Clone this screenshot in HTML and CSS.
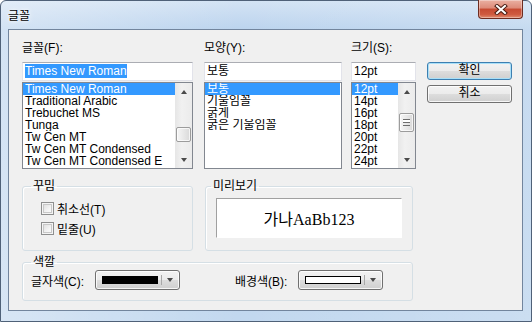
FILE: index.html
```html
<!DOCTYPE html>
<html lang="ko">
<head>
    <meta charset="UTF-8">
    <title>글꼴</title>
    <link rel="stylesheet" href="styles.css">
</head>
<body>
    <div class="window">
        <div class="titlebar">
            <span class="title">글꼴</span>
            <div class="close">
                <svg width="14" height="11" viewBox="0 0 14 11">
                    <path d="M3 2 L11 9 M11 2 L3 9" stroke="#4a1c12" stroke-width="4" stroke-linecap="square" fill="none"/>
                    <path d="M3 2 L11 9 M11 2 L3 9" stroke="#ffffff" stroke-width="2" stroke-linecap="square" fill="none"/>
                </svg>
            </div>
        </div>

        <div class="client">
            <div class="top-row">
                <div class="col col-font">
                    <div class="label">글꼴(F):</div>
                    <div class="textbox"><span class="sel">Times New Roman</span></div>
                    <div class="listbox">
                        <ul class="items">
                            <li class="active">Times New Roman</li>
                            <li>Traditional Arabic</li>
                            <li>Trebuchet MS</li>
                            <li>Tunga</li>
                            <li>Tw Cen MT</li>
                            <li>Tw Cen MT Condensed</li>
                            <li>Tw Cen MT Condensed E</li>
                        </ul>
                        <div class="scrollbar">
                            <div class="sb-btn"><span class="tri-up"></span></div>
                            <div class="sb-track thumb-font"><div class="thumb"></div></div>
                            <div class="sb-btn"><span class="tri-down"></span></div>
                        </div>
                    </div>
                </div>

                <div class="col col-style">
                    <div class="label">모양(Y):</div>
                    <div class="textbox">보통</div>
                    <div class="listbox">
                        <ul class="items">
                            <li class="active">보통</li>
                            <li>기울임꼴</li>
                            <li>굵게</li>
                            <li>굵은 기울임꼴</li>
                        </ul>
                    </div>
                </div>

                <div class="col col-size">
                    <div class="label">크기(S):</div>
                    <div class="textbox">12pt</div>
                    <div class="listbox">
                        <ul class="items">
                            <li class="active">12pt</li>
                            <li>14pt</li>
                            <li>16pt</li>
                            <li>18pt</li>
                            <li>20pt</li>
                            <li>22pt</li>
                            <li>24pt</li>
                        </ul>
                        <div class="scrollbar">
                            <div class="sb-btn"><span class="tri-up"></span></div>
                            <div class="sb-track thumb-size"><div class="thumb"><span class="grip"></span></div></div>
                            <div class="sb-btn"><span class="tri-down"></span></div>
                        </div>
                    </div>
                </div>

                <div class="buttons">
                    <div class="btn btn-default">확인</div>
                    <div class="btn">취소</div>
                </div>
            </div>

            <div class="mid-row">
                <fieldset class="group group-effects">
                    <legend>꾸밈</legend>
                    <div class="group-body">
                        <div class="check"><span class="box"></span>취소선(T)</div>
                        <div class="check"><span class="box"></span>밑줄(U)</div>
                    </div>
                </fieldset>
                <fieldset class="group group-preview">
                    <legend>미리보기</legend>
                    <div class="group-body">
                        <div class="preview">가나AaBb123</div>
                    </div>
                </fieldset>
            </div>

            <fieldset class="group group-colors">
                <legend>색깔</legend>
                <div class="group-body color-row">
                    <span class="color-label">글자색(C):</span>
                    <div class="combo">
                        <span class="swatch swatch-black"></span>
                        <span class="combo-sep"></span>
                        <span class="tri-down"></span>
                    </div>
                    <span class="color-label color-label-bg">배경색(B):</span>
                    <div class="combo">
                        <span class="swatch swatch-white"></span>
                        <span class="combo-sep"></span>
                        <span class="tri-down"></span>
                    </div>
                </div>
            </fieldset>
        </div>
    </div>
</body>
</html>
```

FILE: styles.css
```css
* {
    box-sizing: border-box;
}
body {
    margin: 0;
    width: 532px;
    height: 322px;
    overflow: hidden;
    font-family: "Liberation Sans", "Noto Sans CJK KR", sans-serif;
    font-size: 12px;
    color: #000000;
    background: #ffffff;
}
.window {
    width: 532px;
    height: 322px;
    border: 1px solid #4f6178;
    border-radius: 6px 6px 0 0;
    padding: 0 8px 10px 7px;
    background:
        linear-gradient(to right, rgba(255, 255, 255, 0.35), rgba(255, 255, 255, 0) 45%, rgba(255, 255, 255, 0.15)),
        linear-gradient(#d3e3f4, #bcd4ee 28px, #c2d8ef);
}
.titlebar {
    height: 28px;
    display: flex;
    align-items: flex-start;
}
.title {
    padding-top: 8px;
    line-height: 14px;
    text-shadow: 0 0 6px #ffffff, 0 0 3px #ffffff;
}
.close {
    margin-left: auto;
    margin-top: -1px;
    width: 45px;
    height: 19px;
    border: 1px solid #6e2c20;
    border-top: none;
    border-radius: 0 0 4px 4px;
    display: flex;
    align-items: center;
    justify-content: center;
    background: linear-gradient(#eab0a2 0%, #dd8a78 45%, #c64a32 50%, #cf5a3f 80%, #e08c6f 100%);
    box-shadow: inset 0 0 0 1px rgba(255, 255, 255, 0.35);
}
.client {
    height: 282px;
    border: 1px solid #72859d;
    background: #f0f0f0;
    padding: 10px 0 0 13px;
}

/* top row: lists and buttons */
.top-row {
    display: flex;
    align-items: flex-start;
}
.col-font {
    width: 171px;
    margin-right: 11px;
}
.col-style {
    width: 138px;
    margin-right: 9px;
}
.col-size {
    width: 65px;
    margin-right: 11px;
}
.label {
    height: 14px;
    line-height: 14px;
    margin: 1px 0 7px;
}
.textbox {
    height: 19px;
    border: 1px solid #e2e3ea;
    border-top-color: #abadb3;
    background: #ffffff;
    padding-left: 2px;
    line-height: 16px;
    white-space: nowrap;
    overflow: hidden;
}
.sel {
    background: #3399ff;
    color: #ffffff;
}
.listbox {
    margin-top: 1px;
    height: 87px;
    border: 1px solid #828790;
    background: #ffffff;
    display: flex;
}
.items {
    list-style: none;
    margin: 0;
    padding: 0;
    flex: 1;
    min-width: 0;
    overflow: hidden;
}
.items li {
    height: 12px;
    line-height: 12px;
    padding-left: 2px;
    white-space: nowrap;
    overflow: hidden;
}
.items li.active {
    background: #3399ff;
    color: #ffffff;
}
.col-style .items li.active {
    margin-right: 1px;
}

/* scrollbars */
.scrollbar {
    width: 17px;
    display: flex;
    flex-direction: column;
    background: linear-gradient(to right, #e6e6e6, #f1f1f1 40%, #ebebeb);
}
.sb-btn {
    height: 17px;
    display: flex;
    align-items: center;
    justify-content: center;
}
.sb-track {
    flex: 1;
}
.thumb {
    margin: 0 1px;
    border: 1px solid #9c9c9c;
    border-radius: 2px;
    background: linear-gradient(to right, #f6f6f6, #e8e8e8 50%, #d9d9d9);
    box-shadow: inset 0 0 0 1px rgba(255, 255, 255, 0.7);
    display: flex;
    align-items: center;
    justify-content: center;
}
.thumb-font .thumb {
    margin-top: 27px;
    height: 15px;
}
.thumb-size .thumb {
    margin-top: 13px;
    height: 19px;
}
.grip {
    width: 7px;
    height: 7px;
    border-top: 1px solid #6d6d6d;
    border-bottom: 1px solid #6d6d6d;
    background: linear-gradient(#ffffff 0, #ffffff 2px, #6d6d6d 2px, #6d6d6d 3px, transparent 3px);
}
.tri-up,
.tri-down {
    width: 0;
    height: 0;
    border-left: 3.5px solid transparent;
    border-right: 3.5px solid transparent;
}
.tri-up {
    border-bottom: 4px solid #4a4a4a;
}
.tri-down {
    border-top: 4px solid #4a4a4a;
}

/* buttons */
.buttons {
    width: 85px;
    padding-top: 22px;
}
.btn {
    height: 18px;
    margin-bottom: 5px;
    border: 1px solid #707070;
    border-radius: 3px;
    background: linear-gradient(#f2f2f2 0%, #ebebeb 50%, #dddddd 50%, #cfcfcf 100%);
    box-shadow: inset 0 0 0 1px rgba(255, 255, 255, 0.8);
    text-align: center;
    line-height: 15px;
}
.btn-default {
    border-color: #3c7fb1;
    box-shadow: inset 0 0 0 1px #a8dff8;
}

/* group boxes */
.group {
    margin: 0;
    padding: 0;
    border: 1px solid #d5dfe5;
    border-radius: 3px;
    box-shadow: inset 1px 1px 0 #ffffff;
}
.group legend {
    margin-left: 8px;
    padding: 0 2px;
    line-height: 14px;
}
.mid-row {
    display: flex;
    margin-top: 10px;
}
.group-effects {
    width: 171px;
}
.group-effects .group-body {
    padding: 5px 0 12px 18px;
}
.group-preview {
    width: 208px;
    margin-left: 12px;
}
.group-preview legend {
    margin-left: 5px;
}
.group-preview .group-body {
    padding: 5px 10px 12px 10px;
}
.check {
    height: 20px;
    display: flex;
    align-items: center;
}
.box {
    width: 13px;
    height: 13px;
    margin-right: 3px;
    border: 1px solid #8e8f8f;
    background: linear-gradient(135deg, #d9d9d9, #f4f4f4 60%, #ffffff);
    box-shadow: inset 0 0 0 1px #f4f4f4, inset 0 0 0 2px #c8c8c8;
}
.preview {
    height: 40px;
    border-top: 1px solid #a0a0a0;
    border-left: 1px solid #a0a0a0;
    border-right: 1px solid #ffffff;
    border-bottom: 1px solid #ffffff;
    background: #ffffff;
    display: flex;
    align-items: center;
    justify-content: center;
    font-family: "Liberation Serif", "Noto Sans CJK KR", serif;
    font-size: 16px;
}
.group-colors {
    width: 391px;
    margin-top: 4px;
}
.group-colors .group-body {
    padding: 1px 0 10px 8px;
}
.color-row {
    display: flex;
    align-items: center;
}
.color-label {
    width: 64px;
}
.color-label-bg {
    width: 63px;
    margin-left: 55px;
}
.combo {
    width: 85px;
    height: 20px;
    border: 1px solid #707070;
    border-radius: 3px;
    background: linear-gradient(#f2f2f2 0%, #ebebeb 50%, #dddddd 50%, #cfcfcf 100%);
    box-shadow: inset 0 0 0 1px rgba(255, 255, 255, 0.8);
    display: flex;
    align-items: center;
    padding-left: 6px;
}
.swatch {
    width: 56px;
    height: 8px;
}
.swatch-black {
    background: #000000;
}
.swatch-white {
    background: #ffffff;
    border: 1px solid #000000;
}
.combo-sep {
    width: 1px;
    height: 10px;
    margin: 0 5px 0 3px;
    background: #a8a8a8;
}
```
